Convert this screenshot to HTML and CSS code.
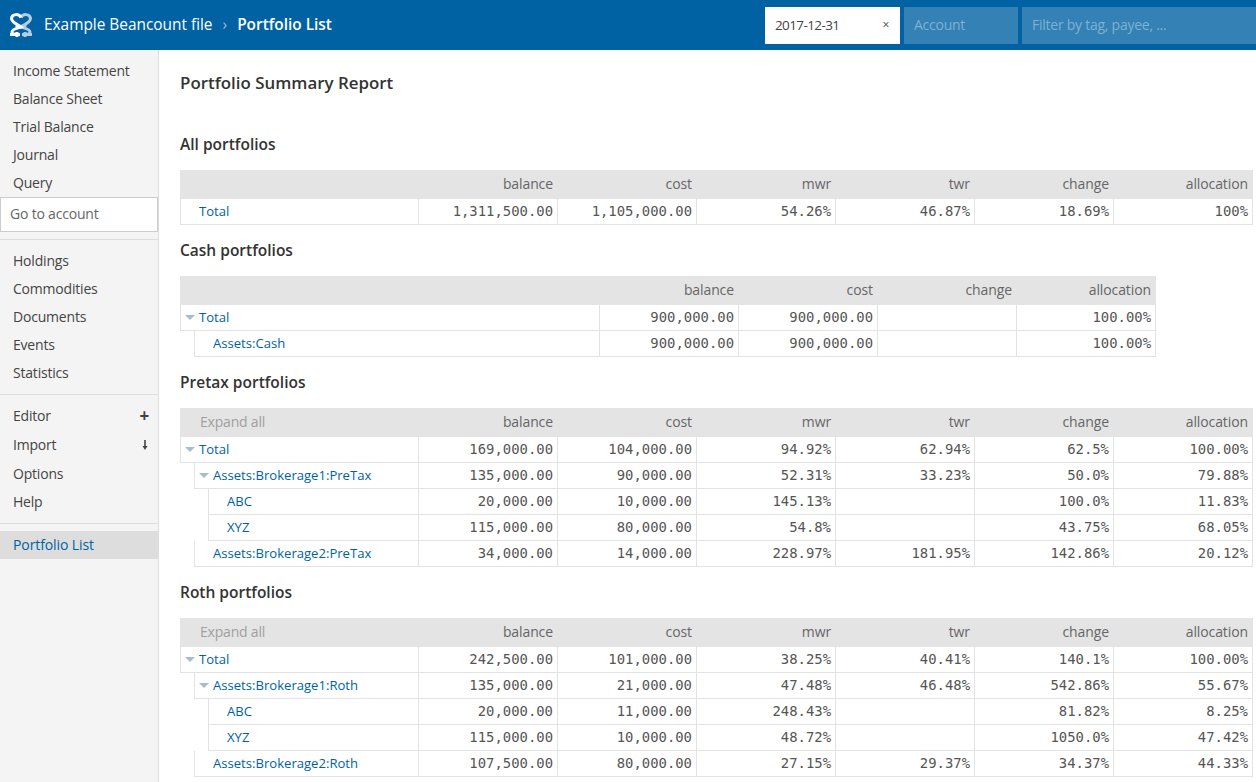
FILE: index.html
```html
<!DOCTYPE html>
<html lang="en">
<head>
<meta charset="utf-8">
<title>Portfolio List</title>
<link rel="stylesheet" href="styles.css">
</head>
<body>
<header class="topbar">
  <svg class="logo" viewBox="0 0 24 26" width="24" height="26" aria-hidden="true">
    <path class="logo-b" d="M12 5.500 C14 1.500 21 1.500 21.500 6.500 C21.500 10.500 15 12.500 12 15 C15 16 21 17 21 20 C21 22 18 22.500 14 22.500 M16 13 V16 M16 20 V25 M13 22.500 H23"/>
    <path class="logo-a" d="M12 5.500 C10 1.500 3 1.500 2.500 6.500 C2.500 10.500 9 12.500 12 15 C9 16 3 17 3 20 C3 22 6 22.500 10 22.500 M8 13 V16 M8 20 V25 M11 22.500 H1"/>
  </svg>
  <h1 class="crumb"><span>Example Beancount file</span><span class="sep">›</span><strong>Portfolio List</strong></h1>
  <div class="filters">
    <div class="filter date"><span class="date-value">2017-12-31</span><span class="clear">×</span></div>
    <div class="filter account">Account</div>
    <div class="filter tags">Filter by tag, payee, ...</div>
  </div>
</header>
<div class="layout">
  <aside class="sidebar">
    <ul class="nav flush">
      <li>Income Statement</li>
      <li>Balance Sheet</li>
      <li>Trial Balance</li>
      <li>Journal</li>
      <li>Query</li>
    </ul>
    <div class="goto">Go to account</div>
    <ul class="nav ruled">
      <li>Holdings</li>
      <li>Commodities</li>
      <li>Documents</li>
      <li>Events</li>
      <li>Statistics</li>
    </ul>
    <ul class="nav ruled tools">
      <li>Editor<span class="plus">+</span></li>
      <li>Import<svg class="dl" viewBox="0 0 8 12" width="8" height="12" aria-hidden="true"><path d="M4 1V7"/><path class="head" d="M1.500 7H6.500L4 11Z"/></svg></li>
      <li>Options</li>
      <li>Help</li>
    </ul>
    <ul class="nav ruled">
      <li class="active">Portfolio List</li>
    </ul>
  </aside>
  <main class="main">
    <h2 class="title">Portfolio Summary Report</h2>

    <h3 class="heading">All portfolios</h3>
    <div class="table">
      <div class="row head"><span class="name"></span><span class="c">balance</span><span class="c">cost</span><span class="c">mwr</span><span class="c">twr</span><span class="c">change</span><span class="c">allocation</span></div>
      <ol class="tree">
        <li><div class="row"><span class="name"><a>Total</a></span><span class="c">1,311,500.00</span><span class="c">1,105,000.00</span><span class="c">54.26%</span><span class="c">46.87%</span><span class="c">18.69%</span><span class="c">100%</span></div></li>
      </ol>
    </div>

    <h3 class="heading">Cash portfolios</h3>
    <div class="table narrow">
      <div class="row head"><span class="name"></span><span class="c">balance</span><span class="c">cost</span><span class="c">change</span><span class="c">allocation</span></div>
      <ol class="tree">
        <li><div class="row"><span class="name open"><a>Total</a></span><span class="c">900,000.00</span><span class="c">900,000.00</span><span class="c"></span><span class="c">100.00%</span></div>
          <ol>
            <li><div class="row"><span class="name"><a>Assets:Cash</a></span><span class="c">900,000.00</span><span class="c">900,000.00</span><span class="c"></span><span class="c">100.00%</span></div></li>
          </ol>
        </li>
      </ol>
    </div>

    <h3 class="heading">Pretax portfolios</h3>
    <div class="table">
      <div class="row head"><span class="name expand">Expand all</span><span class="c">balance</span><span class="c">cost</span><span class="c">mwr</span><span class="c">twr</span><span class="c">change</span><span class="c">allocation</span></div>
      <ol class="tree">
        <li><div class="row"><span class="name open"><a>Total</a></span><span class="c">169,000.00</span><span class="c">104,000.00</span><span class="c">94.92%</span><span class="c">62.94%</span><span class="c">62.5%</span><span class="c">100.00%</span></div>
          <ol>
            <li><div class="row"><span class="name open"><a>Assets:Brokerage1:PreTax</a></span><span class="c">135,000.00</span><span class="c">90,000.00</span><span class="c">52.31%</span><span class="c">33.23%</span><span class="c">50.0%</span><span class="c">79.88%</span></div>
              <ol>
                <li><div class="row"><span class="name"><a>ABC</a></span><span class="c">20,000.00</span><span class="c">10,000.00</span><span class="c">145.13%</span><span class="c"></span><span class="c">100.0%</span><span class="c">11.83%</span></div></li>
                <li><div class="row"><span class="name"><a>XYZ</a></span><span class="c">115,000.00</span><span class="c">80,000.00</span><span class="c">54.8%</span><span class="c"></span><span class="c">43.75%</span><span class="c">68.05%</span></div></li>
              </ol>
            </li>
            <li><div class="row"><span class="name"><a>Assets:Brokerage2:PreTax</a></span><span class="c">34,000.00</span><span class="c">14,000.00</span><span class="c">228.97%</span><span class="c">181.95%</span><span class="c">142.86%</span><span class="c">20.12%</span></div></li>
          </ol>
        </li>
      </ol>
    </div>

    <h3 class="heading">Roth portfolios</h3>
    <div class="table">
      <div class="row head"><span class="name expand">Expand all</span><span class="c">balance</span><span class="c">cost</span><span class="c">mwr</span><span class="c">twr</span><span class="c">change</span><span class="c">allocation</span></div>
      <ol class="tree">
        <li><div class="row"><span class="name open"><a>Total</a></span><span class="c">242,500.00</span><span class="c">101,000.00</span><span class="c">38.25%</span><span class="c">40.41%</span><span class="c">140.1%</span><span class="c">100.00%</span></div>
          <ol>
            <li><div class="row"><span class="name open"><a>Assets:Brokerage1:Roth</a></span><span class="c">135,000.00</span><span class="c">21,000.00</span><span class="c">47.48%</span><span class="c">46.48%</span><span class="c">542.86%</span><span class="c">55.67%</span></div>
              <ol>
                <li><div class="row"><span class="name"><a>ABC</a></span><span class="c">20,000.00</span><span class="c">11,000.00</span><span class="c">248.43%</span><span class="c"></span><span class="c">81.82%</span><span class="c">8.25%</span></div></li>
                <li><div class="row"><span class="name"><a>XYZ</a></span><span class="c">115,000.00</span><span class="c">10,000.00</span><span class="c">48.72%</span><span class="c"></span><span class="c">1050.0%</span><span class="c">47.42%</span></div></li>
              </ol>
            </li>
            <li><div class="row"><span class="name"><a>Assets:Brokerage2:Roth</a></span><span class="c">107,500.00</span><span class="c">80,000.00</span><span class="c">27.15%</span><span class="c">29.37%</span><span class="c">34.37%</span><span class="c">44.33%</span></div></li>
          </ol>
        </li>
      </ol>
    </div>
  </main>
</div>
</body>
</html>
```
FILE: styles.css
```css
* { box-sizing: border-box; }
html, body { height: 100%; overflow: hidden; }
body {
  margin: 0;
  font-family: "Open Sans", "Noto Sans", sans-serif;
  font-size: 14px;
  color: #444;
  background: #fff;
}
ul, ol { list-style: none; margin: 0; padding: 0; }

/* top bar */
.topbar {
  height: 50px;
  background: #0062a3;
  color: #fff;
  display: flex;
  align-items: center;
  padding-left: 9px;
}
.logo { flex: none; }
.logo path { fill: none; stroke-width: 3; }
.logo-a { stroke: #fff; }
.logo-b { stroke: #b3cde0; }
.crumb {
  margin: 0 0 2px 11px;
  font-size: 15.400px;
  font-weight: 400;
  display: flex;
  align-items: center;
}
.crumb strong { font-weight: 600; }
.sep { margin: 0 10px; color: #99c0da; }
.filters { margin-left: auto; display: flex; gap: 4px; }
.filter {
  height: 37px;
  line-height: 36px;
  padding: 0 10px;
  background: #3381b5;
  color: #7db1d3;
  letter-spacing: -0.25px;
}
.date {
  width: 135px;
  background: #fff;
  color: #444;
  display: flex;
  justify-content: space-between;
}
.date-value { font-size: 13.500px; letter-spacing: -0.6px; }
.clear { font-size: 12px; margin-right: 1px; }
.account { width: 114px; }
.tags { width: 234px; }

/* sidebar */
.layout { display: flex; height: 732px; }
.sidebar {
  flex: none;
  width: 159px;
  background: #f4f4f4;
  border-right: 1px solid #ddd;
}
.nav { padding: 7px 0; }
.nav.flush { padding-bottom: 0; }
.nav li {
  height: 28px;
  line-height: 28px;
  padding: 0 9px 0 13px;
  display: flex;
  align-items: center;
  justify-content: space-between;
  letter-spacing: -0.2px;
}
.tools li:nth-child(-n+2) { height: 29px; padding-bottom: 1px; }
.nav .active { background: #ddd; color: #0062a3; letter-spacing: -0.1px; }
.ruled { border-top: 1px solid #ddd; }
.plus { font-weight: 700; font-size: 17px; }
.dl { fill: #444; stroke: #444; stroke-width: 1.6; }
.dl .head { stroke: none; }
.goto {
  height: 35px;
  line-height: 31px;
  padding-left: 9px;
  margin-bottom: 7px;
  background: #fff;
  border: 1px solid #ccc;
  color: #666;
  letter-spacing: -0.2px;
}

/* main */
.main { flex: 1; padding: 21px 3px 0 21px; min-width: 0; color: #333; }
.title {
  margin: 0 0 39px;
  font-size: 16.900px;
  line-height: 24px;
  font-weight: 600;
}
.heading {
  margin: 15px 0 16px;
  font-size: 15.500px;
  line-height: 20px;
  font-weight: 600;
}
.table.narrow { width: 976px; }

.row { display: flex; height: 26px; line-height: 25px; background: #fff; }
.name {
  flex: 1;
  min-width: 0;
  padding-left: 18px;
  line-height: 25px;
  position: relative;
  border-left: 1px solid #e3e3e3;
  border-right: 1px solid #e3e3e3;
  border-bottom: 1px solid #e3e3e3;
  white-space: nowrap;
  font-size: 13.100px;
}
.name a { color: #0062a3; }
.c {
  flex: none;
  width: 139px;
  padding-right: 4px;
  text-align: right;
  font-family: "DejaVu Sans Mono", "Liberation Mono", monospace;
  font-size: 13.900px;
  color: #555;
  border-right: 1px solid #e3e3e3;
  border-bottom: 1px solid #e3e3e3;
}
.tree ol { padding-left: 14px; }

/* fold indicator */
.open::before {
  content: "";
  position: absolute;
  left: 4px;
  top: 10px;
  border-style: solid;
  border-width: 5px 5px 0;
  border-color: #a9bbcf transparent transparent;
}

/* header row */
.head { height: 29px; line-height: 28px; background: #e4e4e4; }
.head .name, .head .c {
  border: 0;
  font-family: "Open Sans", "Noto Sans", sans-serif;
  font-size: 14px;
  color: #666;
}
.head .name { line-height: 28px; }
.head .c { padding-right: 5px; letter-spacing: -0.1px; }
.head .expand { padding-left: 20px; color: #a0a0a0; letter-spacing: -0.2px; }
```
